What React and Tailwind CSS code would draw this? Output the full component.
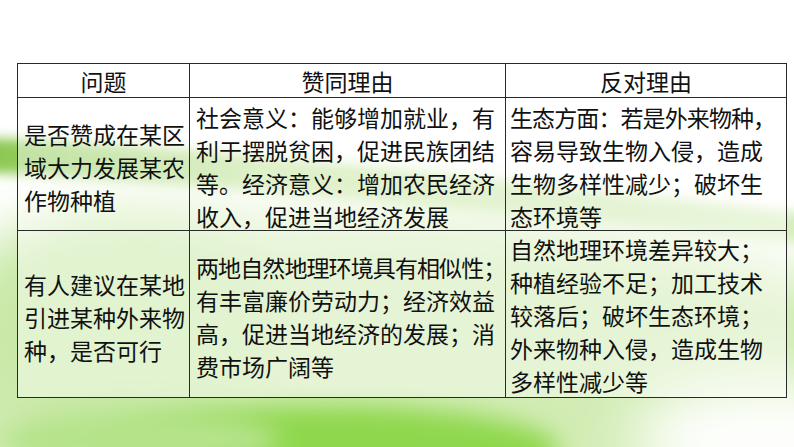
import React from 'react';

// 背景的绿色飘带
function GreenWaves() {
  return (
    <svg className="absolute inset-0 w-full h-full" viewBox="0 0 794 447" preserveAspectRatio="none">
      <defs>
        <filter id="blur30" x="-50%" y="-50%" width="200%" height="200%">
          <feGaussianBlur stdDeviation="30" />
        </filter>
        <filter id="blur12" x="-50%" y="-50%" width="200%" height="200%">
          <feGaussianBlur stdDeviation="12" />
        </filter>
        <filter id="blur6" x="-50%" y="-50%" width="200%" height="200%">
          <feGaussianBlur stdDeviation="6" />
        </filter>
        <linearGradient id="band" x1="0" y1="0" x2="1" y2="0">
          <stop offset="0" stopColor="#86c64a" />
          <stop offset="0.35" stopColor="#c4e59d" />
          <stop offset="1" stopColor="#d8efc0" />
        </linearGradient>
      </defs>
      <rect width="794" height="447" fill="#ffffff" />
      <ellipse cx="380" cy="400" rx="560" ry="190" fill="#d2ecb4" filter="url(#blur30)" />
      <ellipse cx="120" cy="330" rx="160" ry="120" fill="#c9e9a8" filter="url(#blur30)" />
      <path d="M-30 138 C 150 140, 420 170, 820 215 L 820 245 C 420 205, 150 178, -30 172 Z" fill="url(#band)" filter="url(#blur6)" />
      <ellipse cx="330" cy="450" rx="230" ry="45" fill="#8fd84d" filter="url(#blur12)" />
      <ellipse cx="140" cy="440" rx="140" ry="30" fill="#b5e38a" filter="url(#blur12)" />
      <ellipse cx="770" cy="440" rx="140" ry="60" fill="#ffffff" filter="url(#blur30)" />
      <ellipse cx="400" cy="40" rx="600" ry="80" fill="#ffffff" filter="url(#blur12)" />
    </svg>
  );
}

const font = "[font-family:'Noto_Sans_CJK_SC',sans-serif]";

function Lines({ lines, shift = 'translate-y-[3px]' }) {
  return (
    <div className={shift}>
      {lines.map((l, i) => (
        <div key={i} className={'whitespace-nowrap ' + (l.tight ? 'tracking-[-0.9px]' : '')}>
          {l.text || l}
        </div>
      ))}
    </div>
  );
}

const cell = 'border border-[#2a2a2a] align-middle p-0';

export default function App() {
  return (
    <div className={'relative w-[794px] h-[447px] overflow-hidden bg-white text-[#111] ' + font}>
      <GreenWaves />
      <div className="relative pt-[63px] pl-[17px]">
        <table className="table-fixed border-collapse w-[769px] text-[23px] leading-[33px]">
          <colgroup>
            <col className="w-[172px]" />
            <col className="w-[316px]" />
            <col className="w-[281px]" />
          </colgroup>
          <thead>
            <tr className="h-[34px] bg-white/80">
              <th className={cell + ' font-normal text-center'}>
                <div className="translate-y-[1px]">问题</div>
              </th>
              <th className={cell + ' font-normal text-center'}>
                <div className="translate-y-[1px]">赞同理由</div>
              </th>
              <th className={cell + ' font-normal text-center'}>
                <div className="translate-y-[1px]">反对理由</div>
              </th>
            </tr>
          </thead>
          <tbody>
            <tr className="h-[133px] bg-white/45">
              <td className={cell + ' pl-[6px]'}>
                <Lines lines={['是否赞成在某区', '域大力发展某农', '作物种植']} />
              </td>
              <td className={cell + ' pl-[6px]'}>
                <Lines lines={['社会意义：能够增加就业，有', '利于摆脱贫困，促进民族团结', '等。经济意义：增加农民经济', '收入，促进当地经济发展']} />
              </td>
              <td className={cell + ' pl-[4px]'}>
                <Lines lines={[{ text: '生态方面：若是外来物种，', tight: true }, '容易导致生物入侵，造成', '生物多样性减少；破坏生', '态环境等']} />
              </td>
            </tr>
            <tr className="h-[167px] bg-white/45">
              <td className={cell + ' pl-[6px]'}>
                <Lines lines={['有人建议在某地', '引进某种外来物', '种，是否可行']} />
              </td>
              <td className={cell + ' pl-[6px]'}>
                <Lines lines={[{ text: '两地自然地理环境具有相似性；', tight: true }, '有丰富廉价劳动力；经济效益', '高，促进当地经济的发展；消', '费市场广阔等']} />
              </td>
              <td className={cell + ' pl-[4px]'}>
                <Lines shift="translate-y-[1px]" lines={['自然地理环境差异较大；', '种植经验不足；加工技术', '较落后；破坏生态环境；', '外来物种入侵，造成生物', '多样性减少等']} />
              </td>
            </tr>
          </tbody>
        </table>
      </div>
    </div>
  );
}
